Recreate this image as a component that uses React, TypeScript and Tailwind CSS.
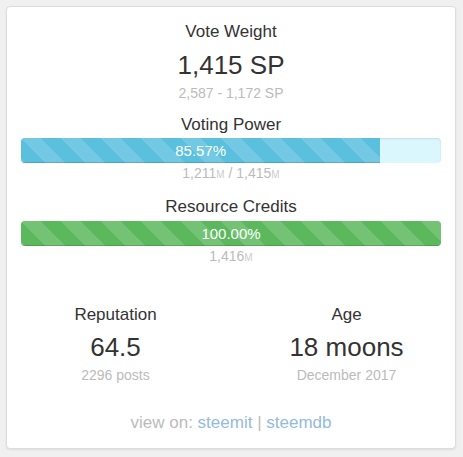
import React from 'react'

const stripes =
  'bg-[linear-gradient(45deg,rgba(255,255,255,.15)_25%,transparent_25%,transparent_50%,rgba(255,255,255,.15)_50%,rgba(255,255,255,.15)_75%,transparent_75%,transparent)] bg-[length:40px_40px]'

function Bar({ pct, label, fill, track }: { pct: number; label: string; fill: string; track: string }) {
  return (
    <div className={`flex h-[25px] w-full overflow-hidden rounded-[4px] shadow-[inset_0_1px_2px_rgba(0,0,0,0.1)] ${track}`}>
      <div
        className={`h-full text-center text-[15px] leading-[25px] text-white shadow-[inset_0_-1px_0_rgba(0,0,0,0.15)] ${fill} ${stripes}`}
        style={{ width: `${pct}%` }}
      >
        {label}
      </div>
    </div>
  )
}

function Unit() {
  return <span className="text-[10px] text-[#ccc]">M</span>
}

export default function App() {
  return (
    <div className="min-h-[457px] w-full bg-[#f0f0f0] pl-[6px] pr-[7px] pt-[6px] font-['Liberation_Sans',Arial,sans-serif]">
      <div className="flex h-[443px] flex-col rounded-[4px] border border-[#dcdcdc] bg-white px-[14px] pt-[15px] text-center text-[#333] shadow-[0_1px_2px_rgba(0,0,0,0.08)]">
        {/* vote weight */}
        <div className="text-[17px] leading-[20px]">Vote Weight</div>
        <div className="mt-[8px] text-[26px] leading-[30px]">1,415 SP</div>
        <div className="mt-[4px] text-[14px] leading-[18px] text-[#bbb]">2,587 - 1,172 SP</div>

        {/* voting power */}
        <div className="mt-[13px] text-[17px] leading-[20px]">Voting Power</div>
        <div className="mt-[3px]">
          <Bar pct={85.57} label="85.57%" fill="bg-[#5bc0de]" track="bg-[#d9f7fd]" />
        </div>
        <div className="mt-[1px] text-[14px] leading-[18px] text-[#bbb]">
          1,211<Unit /> / 1,415<Unit />
        </div>

        {/* resource credits */}
        <div className="mt-[13px] text-[17px] leading-[20px]">Resource Credits</div>
        <div className="mt-[4px]">
          <Bar pct={100} label="100.00%" fill="bg-[#5cb85c]" track="bg-[#e6f4e6]" />
        </div>
        <div className="mt-[1px] text-[14px] leading-[18px] text-[#bbb]">
          1,416<Unit />
        </div>

        {/* reputation / age */}
        <div className="mx-[-21px] mt-[38px] grid grid-cols-2">
          <div>
            <div className="text-[17px] leading-[20px]">Reputation</div>
            <div className="mt-[7px] text-[26px] leading-[30px]">64.5</div>
            <div className="mt-[4px] text-[14px] leading-[18px] text-[#bbb]">2296 posts</div>
          </div>
          <div>
            <div className="text-[17px] leading-[20px]">Age</div>
            <div className="mt-[7px] text-[26px] leading-[30px]">18 moons</div>
            <div className="mt-[4px] text-[14px] leading-[18px] text-[#bbb]">December 2017</div>
          </div>
        </div>

        <div className="mt-[29px] text-[17px] leading-[20px] text-[#bbb]">
          view on: <a className="text-[#93bbde]">steemit</a> | <a className="text-[#93bbde]">steemdb</a>
        </div>
      </div>
    </div>
  )
}
